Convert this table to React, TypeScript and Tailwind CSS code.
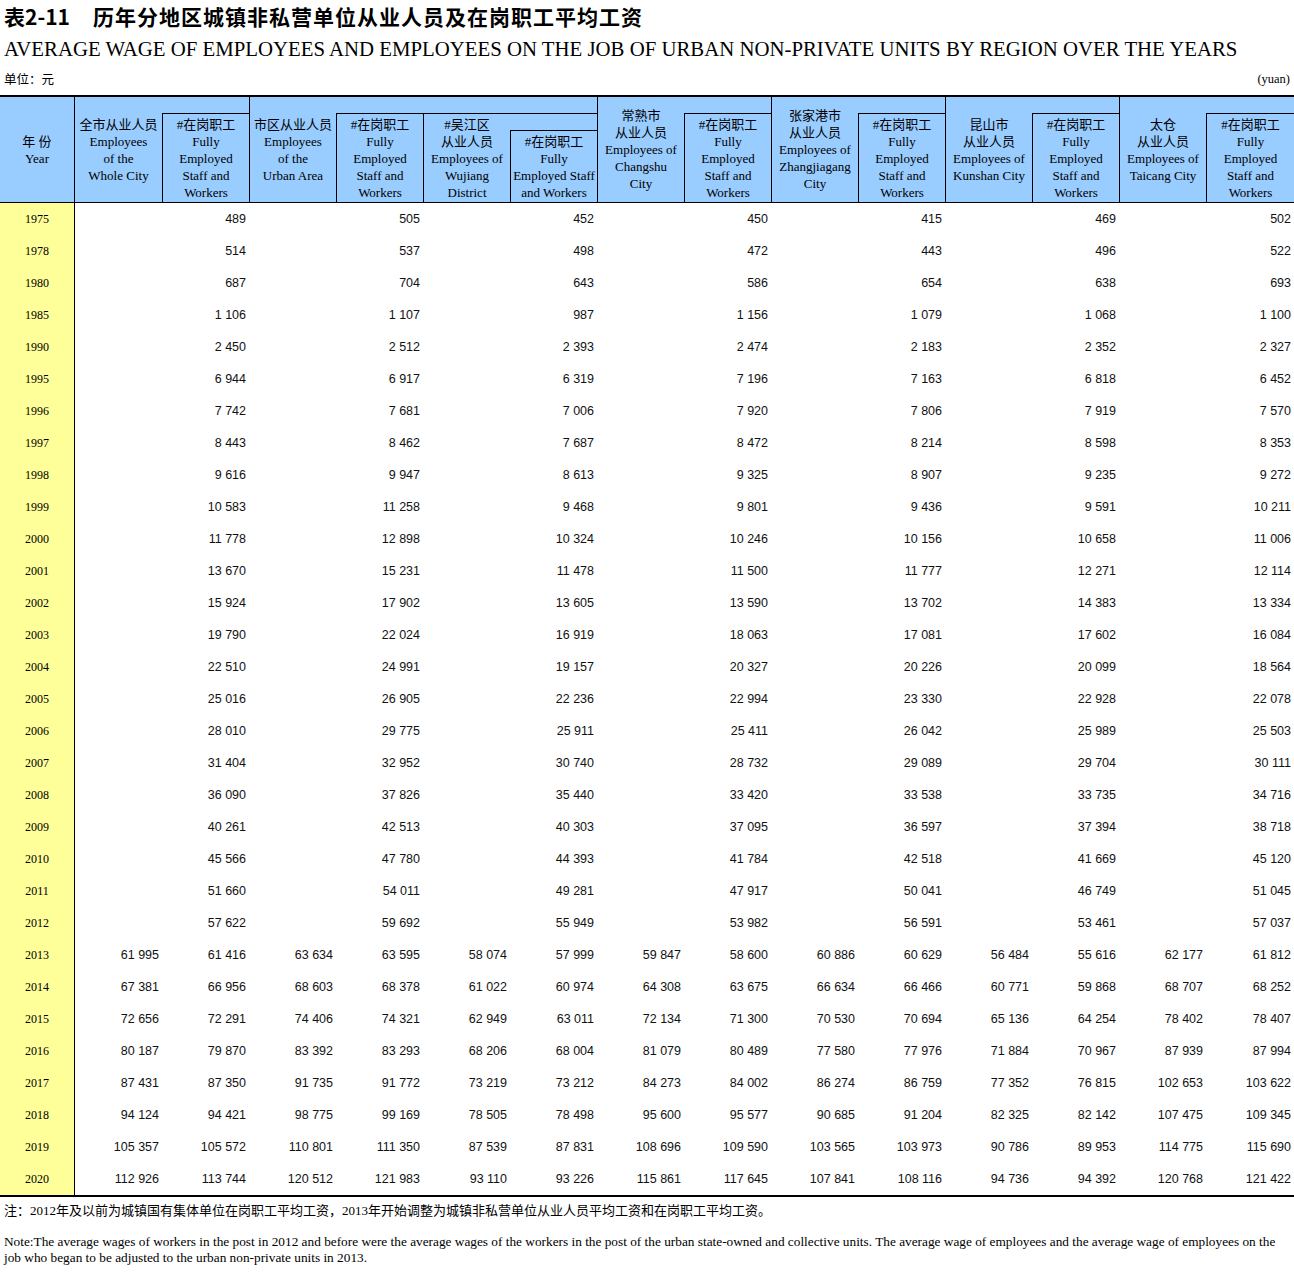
import React from 'react';

type Row = { year: string; values: string[] };

// 1975-2012: only the "#在岗职工" columns carry figures
const earlyRows: [string, string[]][] = [
  ['1975', ['489', '505', '452', '450', '415', '469', '502']],
  ['1978', ['514', '537', '498', '472', '443', '496', '522']],
  ['1980', ['687', '704', '643', '586', '654', '638', '693']],
  ['1985', ['1 106', '1 107', '987', '1 156', '1 079', '1 068', '1 100']],
  ['1990', ['2 450', '2 512', '2 393', '2 474', '2 183', '2 352', '2 327']],
  ['1995', ['6 944', '6 917', '6 319', '7 196', '7 163', '6 818', '6 452']],
  ['1996', ['7 742', '7 681', '7 006', '7 920', '7 806', '7 919', '7 570']],
  ['1997', ['8 443', '8 462', '7 687', '8 472', '8 214', '8 598', '8 353']],
  ['1998', ['9 616', '9 947', '8 613', '9 325', '8 907', '9 235', '9 272']],
  ['1999', ['10 583', '11 258', '9 468', '9 801', '9 436', '9 591', '10 211']],
  ['2000', ['11 778', '12 898', '10 324', '10 246', '10 156', '10 658', '11 006']],
  ['2001', ['13 670', '15 231', '11 478', '11 500', '11 777', '12 271', '12 114']],
  ['2002', ['15 924', '17 902', '13 605', '13 590', '13 702', '14 383', '13 334']],
  ['2003', ['19 790', '22 024', '16 919', '18 063', '17 081', '17 602', '16 084']],
  ['2004', ['22 510', '24 991', '19 157', '20 327', '20 226', '20 099', '18 564']],
  ['2005', ['25 016', '26 905', '22 236', '22 994', '23 330', '22 928', '22 078']],
  ['2006', ['28 010', '29 775', '25 911', '25 411', '26 042', '25 989', '25 503']],
  ['2007', ['31 404', '32 952', '30 740', '28 732', '29 089', '29 704', '30 111']],
  ['2008', ['36 090', '37 826', '35 440', '33 420', '33 538', '33 735', '34 716']],
  ['2009', ['40 261', '42 513', '40 303', '37 095', '36 597', '37 394', '38 718']],
  ['2010', ['45 566', '47 780', '44 393', '41 784', '42 518', '41 669', '45 120']],
  ['2011', ['51 660', '54 011', '49 281', '47 917', '50 041', '46 749', '51 045']],
  ['2012', ['57 622', '59 692', '55 949', '53 982', '56 591', '53 461', '57 037']],
];

const lateRows: [string, string[]][] = [
  ['2013', ['61 995', '61 416', '63 634', '63 595', '58 074', '57 999', '59 847', '58 600', '60 886', '60 629', '56 484', '55 616', '62 177', '61 812']],
  ['2014', ['67 381', '66 956', '68 603', '68 378', '61 022', '60 974', '64 308', '63 675', '66 634', '66 466', '60 771', '59 868', '68 707', '68 252']],
  ['2015', ['72 656', '72 291', '74 406', '74 321', '62 949', '63 011', '72 134', '71 300', '70 530', '70 694', '65 136', '64 254', '78 402', '78 407']],
  ['2016', ['80 187', '79 870', '83 392', '83 293', '68 206', '68 004', '81 079', '80 489', '77 580', '77 976', '71 884', '70 967', '87 939', '87 994']],
  ['2017', ['87 431', '87 350', '91 735', '91 772', '73 219', '73 212', '84 273', '84 002', '86 274', '86 759', '77 352', '76 815', '102 653', '103 622']],
  ['2018', ['94 124', '94 421', '98 775', '99 169', '78 505', '78 498', '95 600', '95 577', '90 685', '91 204', '82 325', '82 142', '107 475', '109 345']],
  ['2019', ['105 357', '105 572', '110 801', '111 350', '87 539', '87 831', '108 696', '109 590', '103 565', '103 973', '90 786', '89 953', '114 775', '115 690']],
  ['2020', ['112 926', '113 744', '120 512', '121 983', '93 110', '93 226', '115 861', '117 645', '107 841', '108 116', '94 736', '94 392', '120 768', '121 422']],
];

const rows: Row[] = [
  ...earlyRows.map(([year, v]) => ({ year, values: v.flatMap((x) => ['', x]) })),
  ...lateRows.map(([year, values]) => ({ year, values })),
];

const fullyEmployed = ['#在岗职工', 'Fully', 'Employed', 'Staff and', 'Workers'];

const HeadText = ({ lines }: { lines: string[] }) => (
  <div className="flex flex-col items-center text-center text-[13px] leading-[17px] text-black whitespace-nowrap">
    {lines.map((line, i) => (
      <span key={i}>{line}</span>
    ))}
  </div>
);

// one region: "从业人员" column + boxed "#在岗职工" column
const RegionGroup = ({ lines, width, first }: { lines: string[]; width: string; first?: boolean }) => (
  <div className={`flex shrink-0 ${width} ${first ? '' : 'border-l border-black'}`}>
    <div className={`flex items-center justify-center shrink-0 ${first ? 'w-[87px]' : 'w-[86px]'}`}>
      <HeadText lines={lines} />
    </div>
    <div className="flex flex-col flex-1">
      <div className="h-[16px] shrink-0" />
      <div className="flex flex-1 items-center justify-center border-t border-l border-black">
        <HeadText lines={fullyEmployed} />
      </div>
    </div>
  </div>
);

export default function App() {
  return (
    <div className="w-[1294px] bg-white text-black font-['Liberation_Serif','Noto_Sans_CJK_SC',serif]">
      {/* Titles */}
      <div className="h-[34px] flex items-center pl-[4px] font-['Noto_Sans_CJK_SC',sans-serif] font-bold text-[21px]">
        <span className="w-[89px]">表2-11</span>
        <span className="tracking-[1px]">历年分地区城镇非私营单位从业人员及在岗职工平均工资</span>
      </div>
      <div className="h-[30px] flex items-center pl-[4px] text-[20.8px] whitespace-nowrap">
        AVERAGE WAGE OF EMPLOYEES AND EMPLOYEES ON THE JOB OF URBAN NON-PRIVATE UNITS BY REGION OVER THE YEARS
      </div>
      <div className="h-[31px] flex items-center justify-between px-[4px] text-[12.5px]">
        <span className="font-['Noto_Sans_CJK_SC',sans-serif]">单位：元</span>
        <span>(yuan)</span>
      </div>

      {/* Table */}
      <div className="border-t-2 border-b-2 border-black">
        {/* Header */}
        <div className="flex h-[106px] bg-[#99ccff] border-b border-black">
          <div className="flex w-[75px] shrink-0 items-center justify-center border-r border-black">
            <HeadText lines={['年 份', 'Year']} />
          </div>

          <RegionGroup first width="w-[174px]" lines={['全市从业人员', 'Employees', 'of the', 'Whole City']} />

          {/* Urban area with Wujiang district nested inside */}
          <div className="flex shrink-0 w-[348px] border-l border-black">
            <div className="flex w-[86px] shrink-0 items-center justify-center">
              <HeadText lines={['市区从业人员', 'Employees', 'of the', 'Urban Area']} />
            </div>
            <div className="flex flex-col flex-1">
              <div className="h-[16px] shrink-0" />
              <div className="flex flex-1 border-t border-l border-black">
                <div className="flex w-[86px] shrink-0 items-center justify-center">
                  <HeadText lines={fullyEmployed} />
                </div>
                <div className="flex flex-1 border-l border-black">
                  <div className="flex w-[86px] shrink-0 items-center justify-center">
                    <HeadText lines={['#吴江区', '从业人员', 'Employees of', 'Wujiang', 'District']} />
                  </div>
                  <div className="flex flex-col flex-1">
                    <div className="h-[16px] shrink-0" />
                    <div className="flex flex-1 items-center justify-center border-t border-l border-black">
                      <HeadText lines={['#在岗职工', 'Fully', 'Employed Staff', 'and Workers']} />
                    </div>
                  </div>
                </div>
              </div>
            </div>
          </div>

          <RegionGroup width="w-[174px]" lines={['常熟市', '从业人员', 'Employees of', 'Changshu', 'City']} />
          <RegionGroup width="w-[174px]" lines={['张家港市', '从业人员', 'Employees of', 'Zhangjiagang', 'City']} />
          <RegionGroup width="w-[174px]" lines={['昆山市', '从业人员', 'Employees of', 'Kunshan City']} />
          <RegionGroup width="w-[175px]" lines={['太仓', '从业人员', 'Employees of', 'Taicang City']} />
        </div>

        {/* Body */}
        <div className="grid grid-cols-[75px_repeat(13,87px)_88px]">
          {rows.map((row) => (
            <React.Fragment key={row.year}>
              <div className="h-[32px] flex items-center justify-center bg-[#ffff99] border-r border-black text-[12px]">
                {row.year}
              </div>
              {row.values.map((v, i) => (
                <div
                  key={i}
                  className="h-[32px] flex items-center justify-end pr-[3px] font-['Liberation_Sans',Arial,sans-serif] text-[12.5px] text-[#111]"
                >
                  {v}
                </div>
              ))}
            </React.Fragment>
          ))}
        </div>
      </div>

      {/* Notes */}
      <div className="h-[28px] flex items-center pl-[4px] text-[13px]">
        注：2012年及以前为城镇国有集体单位在岗职工平均工资，2013年开始调整为城镇非私营单位从业人员平均工资和在岗职工平均工资。
      </div>
      <div className="mt-[9px] pl-[4px] text-[13.3px] leading-[16px] whitespace-nowrap">
        Note:The average wages of workers in the post in 2012 and before were the average wages of the workers in the post of the urban state-owned and collective units. The average wage of employees and the average wage of employees on the
        <br />
        job who began to be adjusted to the urban non-private units in 2013.
      </div>
    </div>
  );
}
